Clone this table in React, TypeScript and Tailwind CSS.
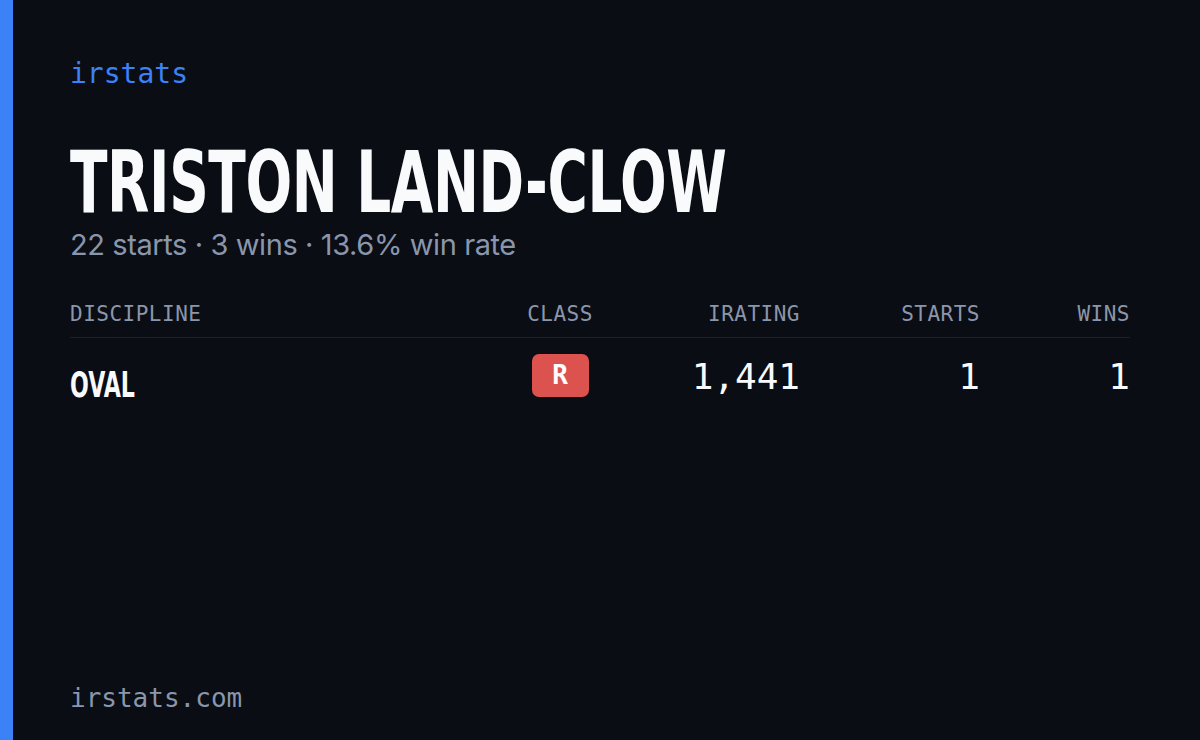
import React from "react";

const mono = { fontFamily: '"DejaVu Sans Mono", "Liberation Mono", monospace' };

export default function App() {
  return (
    <div className="w-[1200px] h-[740px] flex bg-[#0a0d14] overflow-hidden">
      <div className="w-[13px] h-full bg-[#3b82f6] shrink-0" />
      <div className="flex-1 flex flex-col pl-[57px] pr-[70px] pt-[60px] pb-[29px]">
        <div className="text-[28px] leading-[28px] text-[#3b82f6] font-['DejaVu_Sans_Mono',monospace]">irstats</div>
        <div className="mt-[51px] h-[86px] text-[86px] leading-[86px] font-bold text-[#f8fafc] whitespace-nowrap origin-left scale-x-[0.71] tracking-[-0.5px] font-['DejaVu_Sans_Condensed',sans-serif]">
          TRISTON LAND-CLOW
        </div>
        <div className="mt-[5px] text-[29px] leading-[29px] tracking-[-0.4px] text-[#8a96ab] font-['Inter',sans-serif]">
          22 starts · 3 wins · 13.6% win rate
        </div>
        <div className="mt-[45px] grid grid-cols-[425px_130px_175px_180px_150px] pb-[12px] border-b border-[#1c212c] text-[21px] leading-[21px] tracking-[0.5px] text-[#8a96ab] font-['DejaVu_Sans_Mono',monospace]">
          <div>DISCIPLINE</div>
          <div className="text-center">CLASS</div>
          <div className="text-right">IRATING</div>
          <div className="text-right">STARTS</div>
          <div className="text-right">WINS</div>
        </div>
        <div className="pt-[16px] grid grid-cols-[425px_130px_175px_180px_150px] items-start text-[#f8fafc]">
          <div className="mt-[13px] text-[36px] leading-[36px] font-bold origin-left scale-x-[0.684] font-['DejaVu_Sans_Condensed',sans-serif]">
            OVAL
          </div>
          <div className="flex justify-center">
            <div className="w-[57px] h-[43px] rounded-[7px] bg-[#dc524e] flex items-center justify-center text-[26px] font-bold text-white font-['DejaVu_Sans_Mono',monospace]">
              R
            </div>
          </div>
          <div className="mt-[5px] text-right text-[36px] leading-[36px] font-['DejaVu_Sans_Mono',monospace]">1,441</div>
          <div className="mt-[5px] text-right text-[36px] leading-[36px] font-['DejaVu_Sans_Mono',monospace]">1</div>
          <div className="mt-[5px] text-right text-[36px] leading-[36px] font-['DejaVu_Sans_Mono',monospace]">1</div>
        </div>
        <div className="mt-auto text-[26px] leading-[26px] text-[#8a96ab]" style={mono}>
          irstats.com
        </div>
      </div>
    </div>
  );
}
